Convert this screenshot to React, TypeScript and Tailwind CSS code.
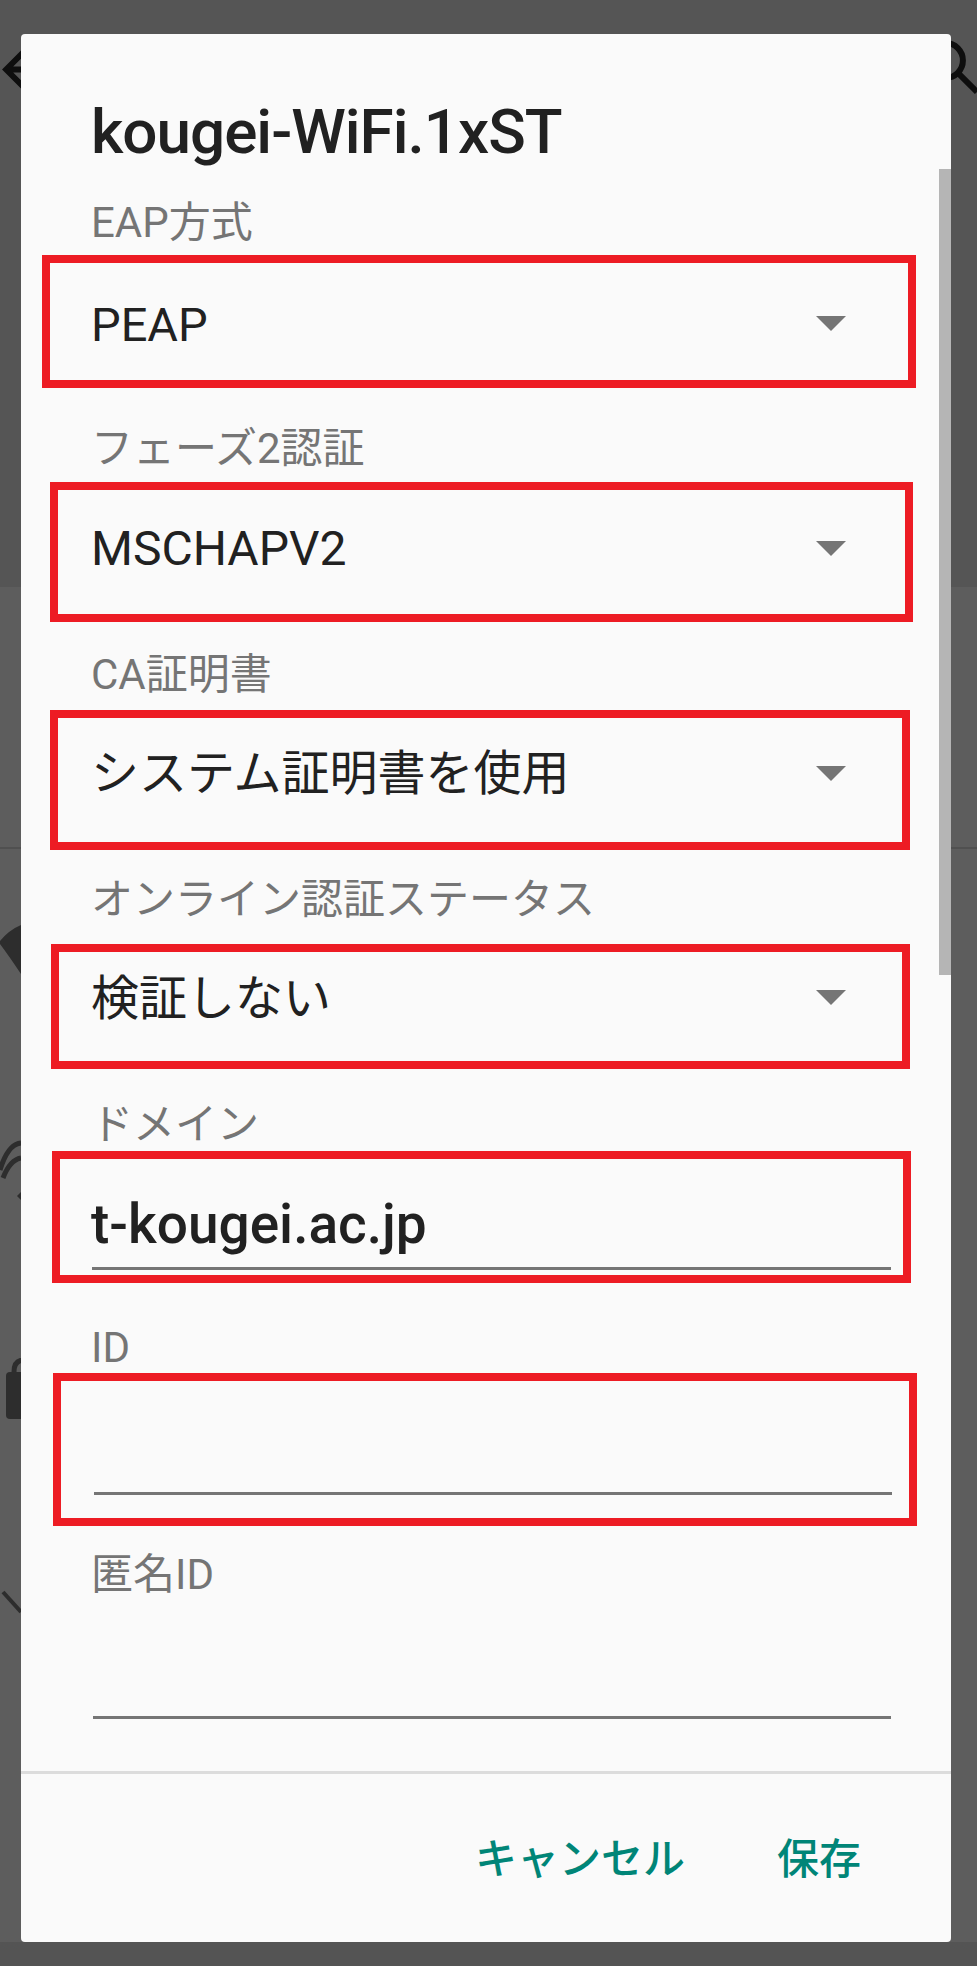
import type { ReactNode } from "react";

function Caret({ className }: { className: string }) {
  return (
    <svg viewBox="0 0 30 15" className={`h-[15px] w-[30px] shrink-0 ${className}`}>
      <polygon points="0,0 30,0 15,15" fill="#757575" />
    </svg>
  );
}

function Label({ className, children }: { className: string; children: ReactNode }) {
  return (
    <div className={`ml-[70px] text-[42px] leading-none text-[#757575] ${className}`}>{children}</div>
  );
}

function BackdropIcons() {
  return (
    <>
      {/* back arrow of the toolbar behind */}
      <svg viewBox="0 0 24 24" className="absolute left-[-7px] top-[38px] h-[63px] w-[63px]">
        <path d="M20 12H5M12 5l-7 7 7 7" fill="none" stroke="#0e0e0e" strokeWidth="2.2" />
      </svg>
      {/* search */}
      <svg viewBox="0 0 24 24" className="absolute left-[917px] top-[32px] h-[72px] w-[72px]">
        <circle cx="9.5" cy="9.5" r="5.8" fill="none" stroke="#0e0e0e" strokeWidth="2" />
        <path d="M13.8 13.8 20 20" stroke="#0e0e0e" strokeWidth="2" />
      </svg>
      {/* list icons peeking out on the left */}
      <svg viewBox="0 0 21 60" className="absolute left-0 top-[922px] h-[60px] w-[21px]">
        <path d="M0 19 Q9 8 21 3 L21 52 Q9 34 0 22 Z" fill="#2d2d2d" />
      </svg>
      <svg viewBox="0 0 21 62" className="absolute left-0 top-[1140px] h-[62px] w-[21px]">
        <path d="M0 30 Q8 4 21 3" fill="none" stroke="#2d2d2d" strokeWidth="5" />
        <path d="M3 38 Q10 20 21 18" fill="none" stroke="#2d2d2d" strokeWidth="5" />
        <path d="M17 56 L21 52 L21 60 Z" fill="#2d2d2d" />
      </svg>
      <svg viewBox="0 0 21 62" className="absolute left-0 top-[1358px] h-[62px] w-[21px]">
        <path d="M14 14 Q14 2 24 2" fill="none" stroke="#2d2d2d" strokeWidth="5" />
        <rect x="6" y="14" width="30" height="47" rx="4" fill="#2d2d2d" />
      </svg>
      <svg viewBox="0 0 21 24" className="absolute left-0 top-[1590px] h-[24px] w-[21px]">
        <path d="M3 2 L21 22" fill="none" stroke="#2d2d2d" strokeWidth="4" />
      </svg>
    </>
  );
}

export default function App() {
  return (
    <div className="relative h-[1966px] w-[977px] overflow-hidden bg-[#5d5d5d] font-['Roboto','Noto_Sans_CJK_JP',sans-serif]">
      {/* dimmed settings page behind the dialog */}
      <div className="flex h-full flex-col">
        <div className="h-[587px] bg-[#555555]" />
        <div className="h-[262px] border-b-2 border-[#505050] bg-[#5d5d5d]" />
        <div className="flex-1 bg-[#5d5d5d]" />
        <div className="h-[24px] bg-[#545454]" />
      </div>
      <BackdropIcons />

      {/* dialog */}
      <div className="absolute left-[21px] top-[34px] flex h-[1908px] w-[930px] flex-col overflow-hidden rounded-[4px] bg-[#fafafa]">
        <div className="relative h-[1737px] overflow-hidden">
          <div className="absolute right-0 top-[135px] h-[806px] w-[12px] bg-[#b5b5b5]" />

          <h1 className="ml-[70px] mt-[67px] text-[62px] leading-none font-medium tracking-[-1px] text-[#212121]">
            kougei-WiFi.1xST
          </h1>

          <Label className="mt-[39px]">EAP方式</Label>
          <div className="ml-[21px] mt-[11px] flex h-[133px] w-[874px] items-start border-8 border-[#ed1c24]">
            <span className="ml-[41px] mt-[38px] text-[47px] leading-none text-[#212121]">PEAP</span>
            <Caret className="ml-auto mr-[62px] mt-[53px]" />
          </div>

          <Label className="mt-[40px]">フェーズ2認証</Label>
          <div className="ml-[29px] mt-[12px] flex h-[140px] w-[863px] items-start border-8 border-[#ed1c24]">
            <span className="ml-[33px] mt-[35px] text-[48px] leading-none text-[#212121]">MSCHAPV2</span>
            <Caret className="ml-auto mr-[59px] mt-[51px]" />
          </div>

          <Label className="mt-[32px]">CA証明書</Label>
          <div className="ml-[29px] mt-[14px] flex h-[140px] w-[860px] items-start border-8 border-[#ed1c24]">
            <span className="ml-[33px] mt-[32px] text-[48px] leading-none text-[#212121]">システム証明書を使用</span>
            <Caret className="ml-auto mr-[56px] mt-[48px]" />
          </div>

          <Label className="mt-[29px]">オンライン認証ステータス</Label>
          <div className="ml-[30px] mt-[23px] flex h-[125px] w-[859px] items-start border-8 border-[#ed1c24]">
            <span className="ml-[32px] mt-[23px] text-[48px] leading-none text-[#212121]">検証しない</span>
            <Caret className="ml-auto mr-[56px] mt-[38px]" />
          </div>

          <Label className="mt-[35px]">ドメイン</Label>
          <div className="ml-[31px] mt-[5px] flex h-[132px] w-[859px] flex-col border-8 border-[#ed1c24]">
            <span className="ml-[31px] mt-[38px] text-[55px] leading-none font-medium text-[#212121]">t-kougei.ac.jp</span>
            <div className="ml-[32px] mt-[15px] h-[3px] w-[799px] bg-[#757575]" />
          </div>

          <Label className="mt-[44px]">ID</Label>
          <div className="ml-[32px] mt-[4px] flex h-[153px] w-[864px] flex-col border-8 border-[#ed1c24]">
            <div className="ml-[33px] mt-[111px] h-[3px] w-[798px] bg-[#757575]" />
          </div>

          <Label className="mt-[28px]">匿名ID</Label>
          <div className="ml-[72px] mt-[120px] h-[3px] w-[798px] bg-[#757575]" />
        </div>

        <div className="h-[3px] bg-[#dcdcdc]" />

        <div className="flex justify-end gap-[92px] pr-[90px] pt-[65px] text-[42px] leading-none font-medium text-[#008577]">
          <button type="button">キャンセル</button>
          <button type="button">保存</button>
        </div>
      </div>
    </div>
  );
}
